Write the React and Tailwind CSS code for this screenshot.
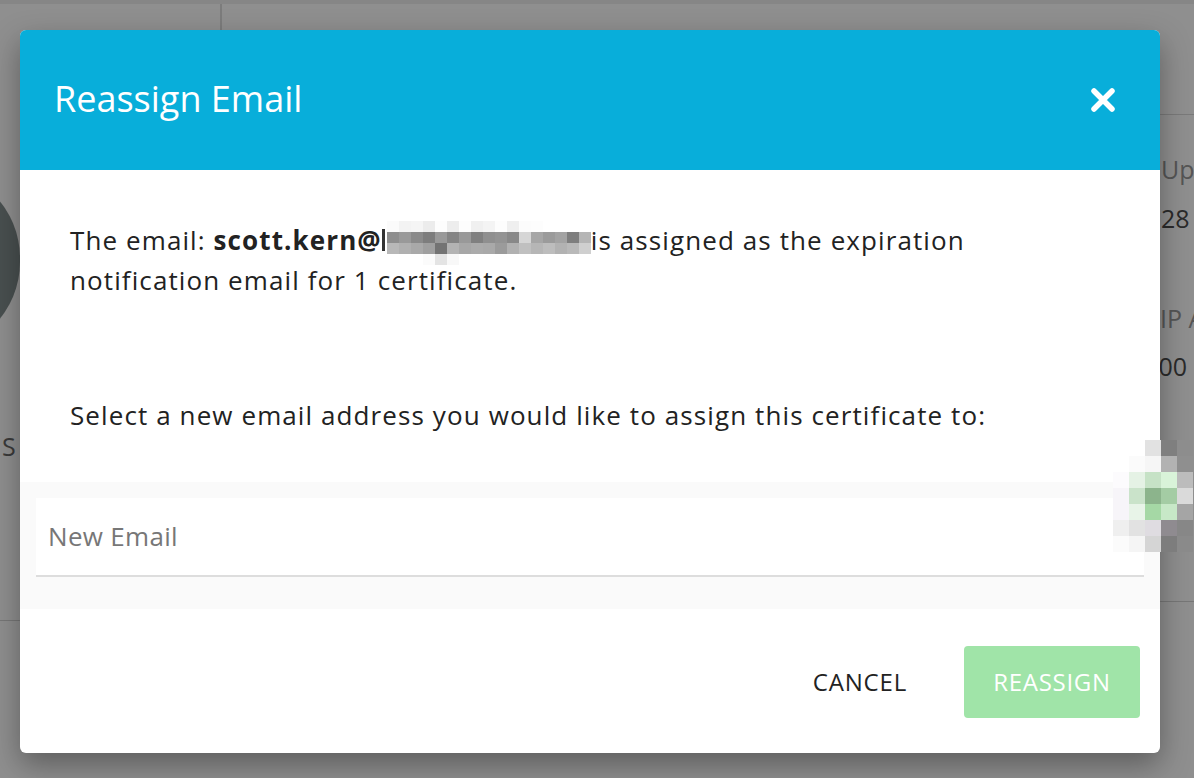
const REDACT = [
  ['#fbfbfb', '#f3f3f3', '#f5f5f5', '#ececec', '#fdfdfd', '#ededed', '#fdfdfd', '#f0f0f0', '#f4f4f4', '#fdfdfd', '#efefef', '#fcfcfc', '#fdfdfd', '#ffffff', '#ffffff', '#ffffff', '#ffffff'],
  ['#8e8e8e', '#999999', '#8a8a8a', '#7d7d7d', '#999999', '#848484', '#999999', '#808080', '#8f8f8f', '#939393', '#888888', '#d6d6d6', '#a6a6a6', '#9b9b9b', '#a3a3a3', '#7e7e7e', '#b5b5b5'],
  ['#b8b8b8', '#b0b0b0', '#a9a9a9', '#9f9f9f', '#737373', '#b3b3b3', '#a7a7a7', '#ababab', '#a9a9a9', '#9b9b9b', '#b1b1b1', '#c0c0c0', '#b6b6b6', '#bdbdbd', '#b2b2b2', '#b9b9b9', '#cfcfcf'],
  ['#ffffff', '#ffffff', '#ffffff', '#fbfbfb', '#e4e4e4', '#f8f8f8', '#ffffff', '#ffffff', '#ffffff', '#ffffff', '#ffffff', '#ffffff', '#ffffff', '#ffffff', '#ffffff', '#ffffff', '#ffffff'],
]

const GREEN = [
  ['transparent', 'transparent', '#e2e2e2', '#7f7f7f', '#8d8d8d'],
  ['transparent', '#fbfbfb', '#f6f6f6', '#b2b2b2', '#8f8f8f'],
  ['#fcfbfd', '#e5f2e5', '#c6e2c6', '#d9f3d9', '#bcbcbc'],
  ['#f7f5f9', '#cae3ca', '#8cb48c', '#a4cca4', '#dadada'],
  ['#f7f5f9', '#e8f4e8', '#a5d8a5', '#c7e8c7', '#a5a5a5'],
  ['#efefef', '#e2e2e2', '#dfdce1', '#8f8b90', '#878787'],
  ['#fbfbfb', '#f5f5f5', '#d5d5d5', '#7d7d7d', '#8a8a8a'],
]

// blurred-out part of the address
function Redacted() {
  return (
    <span className="relative inline-block w-[206px] h-[20px] align-middle">
      <span className="absolute left-[2px] top-[-12px] flex flex-col">
        {REDACT.map((row, r) => (
          <span key={r} className="flex h-[11px]">
            {row.map((c, i) => (
              <span key={i} className="w-[12px] h-full" style={{ backgroundColor: c }} />
            ))}
          </span>
        ))}
      </span>
    </span>
  )
}

// page behind the dim overlay, mostly hidden by the dialog
function Backdrop() {
  return (
    <div className="w-full h-full flex flex-col bg-[#8f8f8f] text-[#3a3a3a] text-[25px] leading-[34px] whitespace-nowrap">
      <div className="h-[4px] shrink-0 bg-[#868686]" />
      <div className="flex-1 flex">
        <div className="w-[20px] shrink-0 flex flex-col">
          <div className="mt-[164px] -ml-[160px] w-[180px] h-[184px] shrink-0 rounded-full bg-[#495050]" />
          <div className="mt-[77px] pl-[2px]">S</div>
          <div className="mt-[157px] h-[1px] bg-[#777]" />
        </div>
        <div className="w-[1140px] shrink-0">
          <div className="ml-[200px] w-[2px] h-[26px] bg-[#7c7c7c]" />
        </div>
        <div className="flex-1 flex flex-col">
          <div className="mt-[110px] h-[1px] bg-[#7a7a7a]" />
          <div className="mt-[37px] pl-[1px] text-[#555]">Up</div>
          <div className="mt-[15px] pl-[1px] text-[#2a2a2a]">28</div>
          <div className="mt-[66px] text-[#555]">IP A</div>
          <div className="mt-[14px] -ml-[8px] text-[#2a2a2a]">.00</div>
          <div className="mt-[218px] h-[1px] bg-[#777]" />
        </div>
      </div>
    </div>
  )
}

export default function App() {
  return (
    <div className="relative w-[1194px] h-[778px] overflow-hidden font-['Open_Sans',sans-serif]">
      <Backdrop />

      {/* dialog */}
      <div className="absolute left-[20px] top-[30px] w-[1140px] h-[723px] bg-white rounded-[6px] overflow-hidden shadow-[0_12px_30px_rgba(0,0,0,0.35)] flex flex-col">
        <div className="h-[140px] shrink-0 bg-[#08aeda] flex items-center justify-between pl-[34px] pr-[44px]">
          <h1 className="text-white text-[36px] leading-none -mt-[2px]">Reassign Email</h1>
          <svg width="26" height="26" viewBox="0 0 26 26" className="-mt-[1px]">
            <path d="M4 4 L22 22 M22 4 L4 22" stroke="#fff" strokeWidth="5.5" strokeLinecap="round" />
          </svg>
        </div>

        <div className="px-[50px] pt-[50px] text-[#222] text-[26px] leading-[40px] tracking-[1.1px]">
          <p className="whitespace-nowrap">
            The email: <b className="font-bold">scott.kern@</b>
            <span className="inline-block w-[3px] h-[22px] bg-[#333] align-middle -mt-[6px]" />
            <Redacted />
            is assigned as the expiration
            <br />
            notification email for 1 certificate.
          </p>
          <p className="mt-[95px] whitespace-nowrap">Select a new email address you would like to assign this certificate to:</p>
        </div>

        <div className="mt-[47px] bg-[#fafafa] px-[16px] pt-[16px] pb-[32px]">
          <div className="h-[79px] bg-white border-b-2 border-[#dddddd] flex items-center px-[12px]">
            <span className="text-[26px] text-[#777] tracking-[0.3px]">New Email</span>
          </div>
        </div>

        <div className="flex justify-end items-center gap-[57px] pt-[37px] pr-[20px]">
          <span className="text-[24px] text-[#222] tracking-[0.8px]">CANCEL</span>
          <div className="w-[176px] h-[72px] rounded-[4px] bg-[#a0e4a8] flex items-center justify-center text-white text-[24px] tracking-[0.7px]">
            REASSIGN
          </div>
        </div>
      </div>

      {/* pixelated overlay on right edge */}
      <div className="absolute left-[1113px] top-[440px] flex flex-col">
        {GREEN.map((row, r) => (
          <div key={r} className="flex h-[16px]">
            {row.map((c, i) => (
              <div key={i} className="w-[16px] h-full" style={{ backgroundColor: c }} />
            ))}
          </div>
        ))}
      </div>
    </div>
  )
}
